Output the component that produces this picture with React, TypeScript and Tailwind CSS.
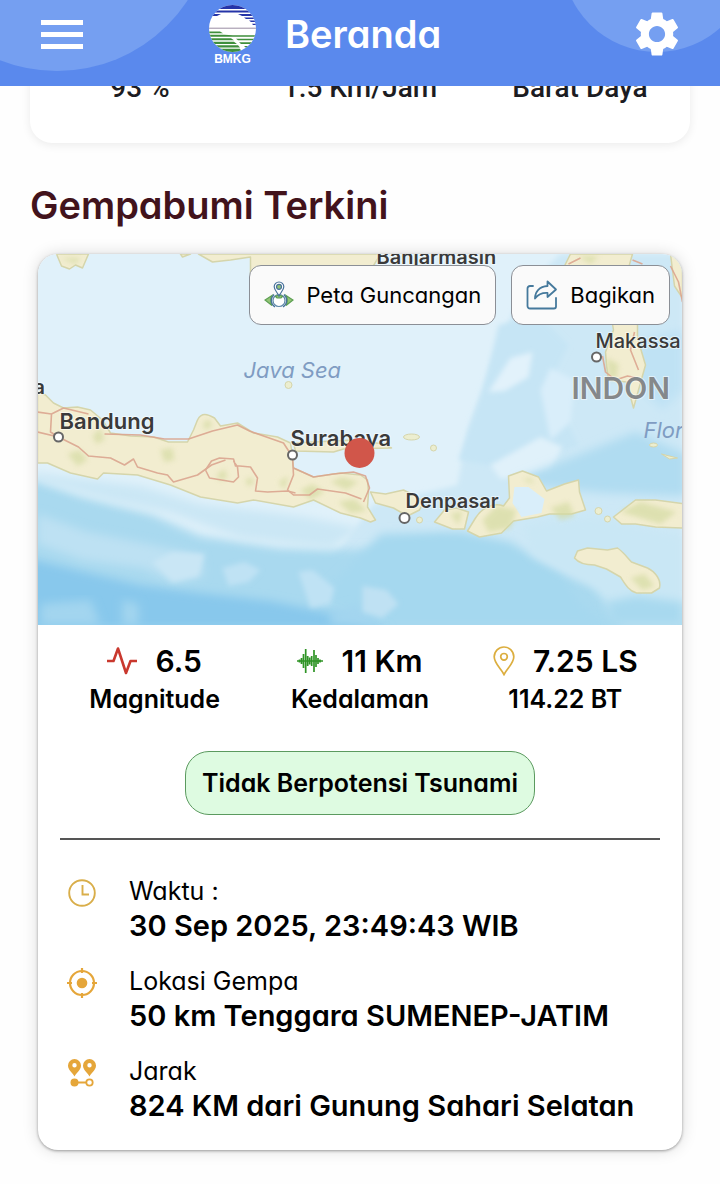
import type { ReactNode } from "react";
import { MdSettings } from "react-icons/md";

interface StatProps {
  icon: ReactNode;
  value: string;
  label: string;
}

interface DetailProps {
  icon: ReactNode;
  label: string;
  value: string;
}

function BmkgLogo() {
  return (
    <svg viewBox="209 4 48 60" className="w-12 h-[60px]" role="img" aria-label="BMKG">
      <defs>
        <clipPath id="logo-disc">
          <circle cx="232.500" cy="28.500" r="23.500" />
        </clipPath>
      </defs>
      <g clipPath="url(#logo-disc)">
        <rect x="209" y="4" width="48" height="50" fill="#fff" />
        <path d="M209 4h48v5h-48zM209 10.500h48v2h-48zM209 14h12l-4 2h-8zM238 14h19v2h-15zM244 17.500h13v1.500h-11zM249 20.500h8v1.500h-6zM252 23.700h5v1.200h-4z" fill="#2534a8" />
        <path d="M209 28.200h48" stroke="#7d6f8a" strokeWidth="0.800" />
        <path d="M209 31.500h11l3 1.700h-14zM209 34.700h15l9 .6h24v1.400h-48zM209 38.300h22l3 2h-25zM236 38.800h21v1.500h-19zM209 41.800h25l3 2.200h-28zM239 42.300h18v1.600h-16zM209 45.200h29l2 2.300h-31zM244 46h13v1.800h-11zM209 48.700h31l2 4h-33z" fill="#3f8f3c" />
      </g>
      <text x="232.500" y="62.500" textAnchor="middle" fontSize="12" fontWeight="700" fill="#fff" fontFamily="Liberation Sans, sans-serif">BMKG</text>
    </svg>
  );
}

function Header() {
  return (
    <header className="sticky top-0 z-10 h-[86px] overflow-hidden bg-[#5a89ed]">
      <div className="absolute -left-[99px] -top-[241px] size-[312px] rounded-full bg-[#759ff1]" />
      <div className="absolute -right-8 -top-[138px] size-[190px] rounded-full bg-[#759ff1]" />
      <div className="relative flex items-center h-[68px] pl-[41px] pr-9">
        <button type="button" aria-label="Menu" className="flex flex-col gap-[7px] w-[42px]">
          <span className="h-[5px] w-full bg-white" />
          <span className="h-[5px] w-full bg-white" />
          <span className="h-[5px] w-full bg-white" />
        </button>
        <div className="ml-[126px]">
          <BmkgLogo />
        </div>
        <h1 className="ml-7 text-[38px] font-semibold text-white">Beranda</h1>
        <button type="button" aria-label="Pengaturan" className="ml-auto text-white">
          <MdSettings size={54} />
        </button>
      </div>
    </header>
  );
}

function WeatherCard() {
  return (
    <section className="-mt-6 mx-[30px] h-[81px] rounded-b-[22px] bg-white shadow-[0_2px_10px_rgba(0,0,0,0.08)]">
      <div className="flex pt-2.5 text-[28px] leading-8 font-medium text-[#1c1c22] text-center font-[Roboto,sans-serif]">
        <span className="flex-1">93 %</span>
        <span className="flex-1">1.5 Km/Jam</span>
        <span className="flex-1">Barat Daya</span>
      </div>
    </section>
  );
}

function MapView() {
  return (
    <svg viewBox="37 254 645 371" preserveAspectRatio="xMidYMid slice" className="block w-full h-[371px] [font-feature-settings:normal]" role="img" aria-label="Peta lokasi gempa">
      <defs>
        <filter id="soft" x="-20%" y="-20%" width="140%" height="140%">
          <feGaussianBlur stdDeviation="5" />
        </filter>
        <filter id="smudge" x="-20%" y="-20%" width="140%" height="140%">
          <feGaussianBlur stdDeviation="2.500" />
        </filter>
      </defs>
      <rect x="37" y="254" width="645" height="371" fill="#e0f1fa" />

      {/* sea depth */}
      <path d="M560 254h122v371h-400l90-120 85-20 10-55 25-70 30-70z" fill="#cde8f6" filter="url(#smudge)" />
      <path d="M498 325l40-10 30 30-20 40 30 60-60 25-60-10 25-70z" fill="#c6e5f5" filter="url(#smudge)" />
      <path d="M488 392l22-34 22-6-4 25-24 14z" fill="#e2f2fb" filter="url(#smudge)" />
      <path d="M540 390l10-22 24 12-4 42-20 18z" fill="#d9eefa" filter="url(#smudge)" />
      <path d="M490 465l50-28 22 10-12 24-50 8z" fill="#e0f1fa" filter="url(#smudge)" />
      <path d="M515 480l70-28 50-20 50 22v42l-80-3-60-6z" fill="#b0dcf1" filter="url(#soft)" />
      <path d="M640 340l42-10v60l-20 20-30-30z" fill="#bfe2f4" filter="url(#soft)" />
      <path d="M20 474l60 22 70 18 50 22 80 12 90 2 70-12 70 18 60 20 60 26 70 6v40H20z" fill="#a9d9ef" filter="url(#soft)" />
      <path d="M30 472l30 4 80 10 60 18 100 12 60 12-30 20-90-10-70-25-60-12-70-20z" fill="#cbe7f5" filter="url(#soft)" />
      <path d="M380 534l80-2 50 10 50 32 20 30 30 22H380l-60-30z" fill="#a5d8ef" filter="url(#soft)" />
      <path d="M20 556l60 15 60 14 60 8 70 8 60 12 60 16H20z" fill="#88c8ec" filter="url(#soft)" />
      <path d="M37 514l50 18 70 14 44 10 2 20-30 6-30-14-60-8-46-16z" fill="#bde1f3" filter="url(#soft)" />
      <path d="M152 562l20-10 32 2-6 22-26 6z" fill="#c9e6f5" filter="url(#smudge)" />
      <path d="M222 568l22-6 16 8-12 12-20 4zM298 572l14-2 22 18-4 16-20 4z" fill="#bfe2f4" filter="url(#smudge)" />
      <path d="M122 600l16 4v21h-16zM40 604l50-4 10 25H40zM330 612l30-8 20 21h-50z" fill="#a3d5ef" filter="url(#soft)" />
      <path d="M362 586l24 4 12 14-16 14-20-6z" fill="#bfe1f3" filter="url(#smudge)" />
      <path d="M522 524l70-8 90 20v89h-60l-30-40-60-30z" fill="#c9e7f5" filter="url(#soft)" />
      <path d="M606 602l30-6 46 6v23h-70z" fill="#a8d9ef" filter="url(#soft)" />

      {/* land */}
      <g fill="#f2edd0" stroke="#d5d5ab" strokeWidth="1.500" strokeLinejoin="round">
        <path d="M37 392l8 3 8 8 10 5 14-1 13 3 12 10 8 13 20 3 23 1 15 5 19 0 6-12 4-10c4-8 10-6 17-2l6 8 17-3 16 10 24 4 13 6 2 14 1 11 20 9 27-4 20 2 7 5 1 13-1 14 8 13-5 2-10-4-20-5-27-13-20 7-40-7-16 3-37-6-30-12-33-10-34-2-6 6-27-6-23-10-10 0z" />
        <path d="M293 443l60-3 30 4 8 4-48 1-10 3-38-1z" />
        <path d="M370 492l15 2 18-4 12 6 8 6-4 8-12 6-14-8-18-5zM434 522l10-12 12-2 12 4-4 17-12 0zM475 518c6-10 18-16 28-12l6-8-1-22 14-5 16 6 8 14 18-7 14-4 1 12 6 18-14 4-22 0-12 3-24 4-12 12-22 4-12-6z" />
        <path d="M613 517l22-17 20 0 30 4v24l-30-1-20-3-14 0z" />
        <path d="M574 558l3-7 10-3 20 2 10-2c6 4 10 10 14 14l16 6c8 4 14 12 12 20l-8 5-15 0c-8-2-12-10-16-16l-14-8-12-4c-8 0-16-2-20-7z" />
        <path d="M606 365l-1-13 8-22-2-12h26v20l8 27-7 25-5 18-7-26-18-2z" />
        <path d="M570 254h62l-4 14-30 8-34-10zM670 254h12v44l-8-12z" />
        <path d="M56 254h32l-6 14-7-3-6 4-8-3z" />
        <path d="M180 254h10l-8 3zM198 254l14 8 18-2 20-3v30l110 0 20-33z" />
      </g>
      <path d="M512 503l2-16 14 0 16 12-3 14-20 4z" fill="#d9eefa" />

      {/* vegetation */}
      <g fill="#d3daa0" opacity="0.65" filter="url(#smudge)">
        <path d="M67 454l12-4 8 10-10 6zM160 450l12-2 2 12-10 2zM92 436l8-8 4 12-8 4zM202 424l6-5 4 7-7 4z" />
        <path d="M216 475l8-6 3 8-7 4zM245 480l6-3 3 6-7 3zM278 482l10-6-4 14zM300 490l12-6 12 8-14 8zM330 482l12-5 16 5-12 8zM338 502l16-3 12 12-16 2z" />
        <path d="M482 520l14-14 20 4-6 18-22 4zM550 508l18-6 6 14-14 4zM620 512l20-10 36 10-16 12zM630 578l14-4 10 12-12 4zM578 256h20l-8 8zM606 358l12 6-2 16-8-2zM60 258h20l-5 6z" />
        <path d="M450 514l12-3-4 14zM522 480l8-2 4 6z" />
      </g>

      {/* roads and borders */}
      <g fill="none" stroke="#dba58f" strokeWidth="1.600" strokeLinejoin="round" opacity="0.9">
        <path d="M37 412l14 2 12-6 25 6M51 414l-1 18 8 5M37 432l21 5 20 10 10 9 22 2 14 7 9-6 4 8 20 6 10 2 6 7 24-7 14-10 14-5" />
        <path d="M205 470l6-9 8-3 14 1 2 7 4 0 11 1 7 11-2 13 12 1 20-1 8 2M205 470l4 8 12 2 12 2 5-5-1-10-4-6" />
        <path d="M104 434l36 1 24 4 24 0 24-8 25-6 12 6 34 12 9 14 1 18-6 15 6 5 16 0 8-6 28 4 16 6" />
        <path d="M293 468l20 9 20-3 20-2 12 4 4 12-6 14" />
        <path d="M602 356l3 16 10 8 12-4 10 2M634 332l-4 18 8 20M670 266l8 16 4 20M568 264l12-6M632 260l10 4" />
      </g>
      <g fill="#eceed0" stroke="#d5d5ab">
        <circle cx="288" cy="385" r="3.500" />
        <ellipse cx="411" cy="437" rx="8" ry="3" />
        <circle cx="433" cy="448" r="3" />
        <circle cx="598" cy="511" r="3.500" />
        <circle cx="607" cy="519" r="3" />
        <circle cx="419" cy="520" r="3" />
        <ellipse cx="653" cy="445" rx="4" ry="2" />
        <path d="M661 454l16 4-8 1z" />
      </g>

      {/* towns */}
      <g fill="#fff" stroke="#666" strokeWidth="2">
        <circle cx="58" cy="437" r="4.500" />
        <circle cx="292" cy="455" r="4.500" />
        <circle cx="404" cy="518" r="5" />
        <circle cx="596" cy="357" r="4.500" />
      </g>
      <g fontFamily="Inter, sans-serif" fontSize="22" fontWeight="600" fill="#3a3a3a" stroke="#fff" strokeOpacity="0.5" strokeWidth="2" paintOrder="stroke">
        <text x="33" y="394" fontSize="20">a</text>
        <text x="59" y="429">Bandung</text>
        <text x="290" y="446">Surabaya</text>
        <text x="405" y="508" fontSize="20">Denpasar</text>
        <text x="376" y="264" fontSize="20">Banjarmasin</text>
        <text x="595" y="348" fontSize="20" fontWeight="500">Makassa</text>
        <text x="571" y="399" fontSize="30" fill="#85888a">INDON</text>
      </g>
      <g fontFamily="Inter, sans-serif" fontSize="22" fontStyle="italic" fill="#7f9cc2">
        <text x="243" y="378">Java Sea</text>
        <text x="643" y="438">Flor</text>
      </g>
      <circle cx="359" cy="453" r="15" fill="#d1564a" />
    </svg>
  );
}

function ShakeMapIcon() {
  return (
    <svg viewBox="0 0 30 28" className="w-[30px] h-7" fill="none" stroke="#47719b" strokeWidth="1.200">
      <path d="M8 14.500L1 19l7 5.500c-1.600-3.500-1.600-7 0-10zM22 14.500l7 4.500-7 5.500c1.600-3.500 1.600-7 0-10z" fill="#93c476" stroke="#5c9f52" />
      <path d="M10 13.500c-4 4-3.500 9.500 1 12.500M20 13.500c4 4 3.500 9.500-1 12.500" />
      <circle cx="15" cy="19.500" r="6" stroke="#5d87aa" fill="#fff" />
      <path d="M11.500 15.500c2-1.700 5-1.700 7 0l-1.500 1.500h-4z" fill="#93c476" stroke="#5c9f52" />
      <path d="M15 15c-1-3-4.800-5.500-4.800-9.200a4.800 4.800 0 019.600 0C19.800 9.500 16 12 15 15z" fill="#fff" />
      <circle cx="15" cy="5.800" r="2.500" fill="#93c476" />
    </svg>
  );
}

function ShareIcon() {
  return (
    <svg viewBox="0 0 32 30" className="w-8 h-[30px]" fill="none" stroke="#45799c" strokeWidth="1.800" strokeLinejoin="round" strokeLinecap="round">
      <path d="M7 6H4a2.500 2.500 0 00-2.500 2.500V26A2.500 2.500 0 004 28.500h24a2 2 0 002-2V18" />
      <path d="M21.500 1.500l8.500 8-8.500 7.500v-4c-5-.3-9 1-12.500 5.500C9 11.500 13.500 6.500 21.500 6z" />
    </svg>
  );
}

function PulseIcon() {
  return (
    <svg viewBox="0 0 30 28" className="w-[30px] h-7" fill="none" stroke="#c9382e" strokeWidth="2.600" strokeLinejoin="round">
      <path d="M0 14h6.500L11 1.500 19 26l4.500-12H30" />
    </svg>
  );
}

function DepthIcon() {
  return (
    <svg viewBox="0 0 26 26" className="size-[26px]" stroke="#2f9426" strokeWidth="1.700">
      <path d="M.500 12.500v1M2.500 11.500v3M4.500 10v6M6.500 6v14M8.700 1v24M10.700 8v10M12.700 9.500v7M14.700 8v10M17 2v22M19 7v12M21 10v6M23 11.500v3M25.200 12.500v1M0 13h26" />
    </svg>
  );
}

function PinIcon() {
  return (
    <svg viewBox="0 0 22 30" className="w-[22px] h-[30px]" fill="none" stroke="#dcae3f" strokeWidth="1.700">
      <path d="M11 28.500C8 22.500 1.200 17.500 1.200 10.800a9.800 9.800 0 0119.600 0C20.800 17.500 14 22.500 11 28.500z" />
      <circle cx="11" cy="10.800" r="3.300" />
    </svg>
  );
}

function ClockIcon() {
  return (
    <svg viewBox="0 0 30 30" className="size-[30px]" fill="none" stroke="#d9ae4a" strokeWidth="1.900">
      <circle cx="15" cy="15" r="12.800" />
      <path d="M15.500 7v9.500H22" />
    </svg>
  );
}

function TargetIcon() {
  return (
    <svg viewBox="0 0 30 30" className="size-[30px]" fill="none" stroke="#e5a63a" strokeWidth="2.200">
      <circle cx="15" cy="15" r="12" />
      <circle cx="15" cy="15" r="5.300" fill="#e5a63a" stroke="none" />
      <path d="M15 0v5M15 25v5M0 15h5M25 15h5" />
    </svg>
  );
}

function DistanceIcon() {
  return (
    <svg viewBox="0 0 30 30" className="size-[30px]" fill="#e5a63a">
      <path fillRule="evenodd" d="M7.500 18.500C5.500 14.500 1 12.300 1 7.600a6.500 6.500 0 0113 0c0 4.700-4.500 6.900-6.500 10.900zM7.500 9.500a2.200 2.200 0 100-4.400 2.200 2.200 0 000 4.400z" />
      <path fillRule="evenodd" d="M22.500 18.500c-2-4-6.500-6.200-6.500-10.900a6.500 6.500 0 0113 0c0 4.700-4.500 6.900-6.500 10.900zM22.500 9.500a2.200 2.200 0 100-4.400 2.200 2.200 0 000 4.400z" />
      <circle cx="7.500" cy="24.500" r="4" />
      <path d="M8 24.500h11" stroke="#e5a63a" strokeWidth="2.200" />
      <circle cx="22.500" cy="24.500" r="3.200" fill="#fff" stroke="#e5a63a" strokeWidth="1.800" />
    </svg>
  );
}

function Stat({ icon, value, label }: StatProps) {
  return (
    <div className="flex-1 flex flex-col items-center font-semibold">
      <div className="flex items-center gap-[18px] text-[30px] leading-10">
        {icon}
        <span>{value}</span>
      </div>
      <span className="text-[25px] leading-9">{label}</span>
    </div>
  );
}

function Detail({ icon, label, value }: DetailProps) {
  return (
    <li className="flex gap-8">
      <span className="pt-[3px]">{icon}</span>
      <div className="min-w-0">
        <p className="text-[25px] leading-8">{label}</p>
        <p className="text-[29px] leading-[38px] font-semibold">{value}</p>
      </div>
    </li>
  );
}

export default function App() {
  return (
    <div className="min-h-screen pb-[34px] bg-[#fefefe] text-black font-[Inter,sans-serif] [font-feature-settings:'cv11']">
      <Header />
      <WeatherCard />

      <h2 className="mt-9 mx-[30px] text-[38px] leading-[52px] font-semibold text-[#42131c]">Gempabumi Terkini</h2>

      <section className="mt-[23px] mx-[38px] overflow-hidden rounded-[20px] bg-white shadow-[0_1px_3px_rgba(0,0,0,0.35),0_0_16px_rgba(0,0,0,0.15)]">
        <div className="relative">
          <MapView />
          <div className="absolute top-[11px] right-3 flex gap-[15px] text-[22px]">
            <button type="button" className="flex items-center gap-3 h-[60px] px-[14px] rounded-xl border border-[#8b8f96] bg-[#fafafa]">
              <ShakeMapIcon />
              Peta Guncangan
            </button>
            <button type="button" className="flex items-center gap-3 h-[60px] px-[14px] rounded-xl border border-[#8b8f96] bg-[#fafafa]">
              <ShareIcon />
              Bagikan
            </button>
          </div>
        </div>

        <div className="flex px-[14px] pt-4">
          <Stat icon={<PulseIcon />} value="6.5" label="Magnitude" />
          <Stat icon={<DepthIcon />} value="11 Km" label="Kedalaman" />
          <Stat icon={<PinIcon />} value="7.25 LS" label="114.22 BT" />
        </div>

        <p className="w-fit mt-[34px] mx-auto px-4 py-[13px] rounded-3xl border border-[#5b9a5f] bg-[#defbe1] text-[25px] leading-9 font-semibold">
          Tidak Berpotensi Tsunami
        </p>

        <hr className="mt-[23px] mx-[22px] border-t-2 border-[#555]" />

        <ul className="flex flex-col gap-5 pt-[35px] pb-[25px] pl-[29px] pr-2">
          <Detail icon={<ClockIcon />} label="Waktu :" value="30 Sep 2025, 23:49:43 WIB" />
          <Detail icon={<TargetIcon />} label="Lokasi Gempa" value="50 km Tenggara SUMENEP-JATIM" />
          <Detail icon={<DistanceIcon />} label="Jarak" value="824 KM dari Gunung Sahari Selatan" />
        </ul>
      </section>
    </div>
  );
}
